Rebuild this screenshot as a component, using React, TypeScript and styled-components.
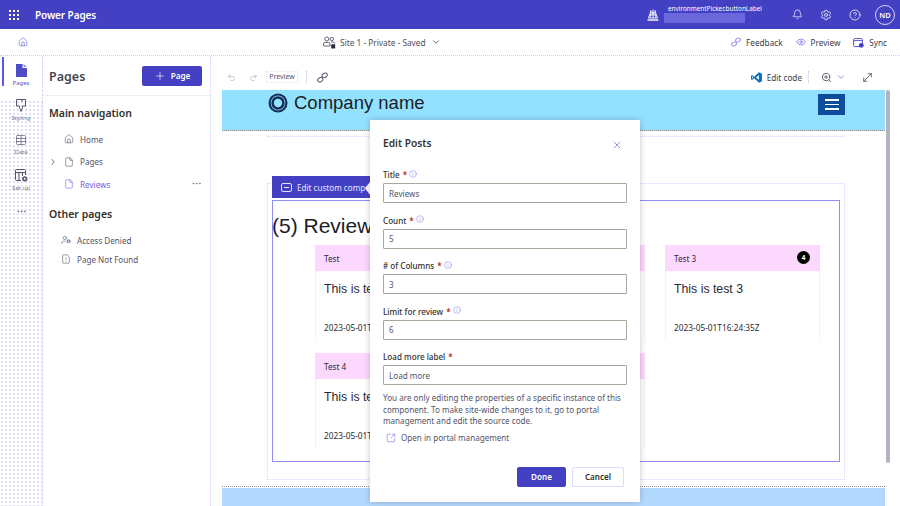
import React from 'react';
import styled, { createGlobalStyle } from 'styled-components';
import {
  Home, File, Table, Bell, Settings, HelpCircle, X, Info, ChevronDown, ChevronRight,
  Undo2, Redo2, ZoomIn, MoveDiagonal, SquareArrowOutUpRight, Plus, Eye,
  UserCog, FileWarning, MoreHorizontal,
} from 'lucide-react';

const Global = createGlobalStyle`
  html, body { margin: 0; padding: 0; background: #fff; }
  body { font-family: "Noto Sans", "Open Sans", sans-serif; color: #323130; }
  * { box-sizing: border-box; }
`;

const App_ = styled.div`
  position: relative;
  width: 900px;
  height: 506px;
  overflow: hidden;
  display: flex;
  flex-direction: column;
  background: #fff;
`;

const TopBar = styled.header`
  height: 29px;
  flex: none;
  background: #4340c4;
  color: #fff;
  display: flex;
  align-items: center;
  padding-left: 9px;
`;
const Waffle = styled.div`
  width: 10px;
  height: 10px;
  display: grid;
  grid-template-columns: repeat(3, 2px);
  grid-auto-rows: 2px;
  gap: 2px;
  margin-right: 16px;
  i { background: #fff; }
`;
const Brand = styled.span`
  font-size: 10px;
  font-weight: 600;
  letter-spacing: -0.1px;
`;
const EnvGroup = styled.div`
  margin-left: auto;
  display: flex;
  align-items: center;
  margin-right: 35px;
`;
const EnvText = styled.div`
  margin-left: 5px;
  display: flex;
  flex-direction: column;
  width: 93px;
`;
const EnvLabel = styled.span`
  font-size: 6.4px;
  line-height: 9px;
  margin-top: -3px;
  margin-left: 4px;
  white-space: nowrap;
`;
const EnvBlur = styled.span`
  display: block;
  width: 81px;
  height: 10px;
  background: #6a66dc;
`;
const TopIcons = styled.div`
  display: flex;
  align-items: center;
  gap: 17px;
  margin-right: 5px;
`;
const Avatar = styled.div`
  width: 20px;
  height: 20px;
  margin-left: -3px;
  border: 1px solid #d8d7f5;
  border-radius: 50%;
  font-size: 7.5px;
  font-weight: 600;
  display: flex;
  align-items: center;
  justify-content: center;
`;

const SubBar = styled.div`
  height: 27px;
  flex: none;
  display: flex;
  align-items: center;
  border-bottom: 1px dotted #cfcdf5;
  position: relative;
  padding: 0 13px 0 18px;
`;
const SiteInfo = styled.div`
  position: absolute;
  left: 323px;
  top: 0;
  height: 26px;
  display: flex;
  align-items: center;
  gap: 4px;
  font-size: 8.3px;
  color: #4d4b5c;
`;
const SiteChevron = styled(ChevronDown)`
  margin-left: 1px;
`;
const SubActions = styled.div`
  margin-left: auto;
  display: flex;
  align-items: center;
  gap: 13px;
`;
const SubAction = styled.span`
  display: inline-flex;
  align-items: center;
  gap: 5px;
  font-size: 8.2px;
  color: #3c3b48;
  white-space: nowrap;
`;

const Body = styled.div`
  flex: 1;
  min-height: 0;
  display: flex;
`;

const Rail = styled.nav`
  width: 43px;
  flex: none;
  border-right: 1px dotted #d4d2f7;
  background-color: #fff;
  background-image: radial-gradient(#dddbfb 0.7px, transparent 0.8px);
  background-size: 4px 4px;
  display: flex;
  flex-direction: column;
  align-items: center;
`;
const RailItem = styled.div<{ $active?: boolean }>`
  position: relative;
  width: 100%;
  height: ${p => (p.$active ? 43 : 35)}px;
  padding-top: ${p => (p.$active ? 8 : 0)}px;
  display: flex;
  flex-direction: column;
  align-items: center;
  font-size: 6px;
  line-height: 8px;
  color: ${p => (p.$active ? '#5a57c9' : '#77768a')};
  gap: 2px;
  ${p => p.$active && `
    background: #fff;
    &::before {
      content: "";
      position: absolute;
      left: 2px;
      top: 1px;
      width: 2px;
      height: 29px;
      background: #5a57e0;
    }
  `}
`;
const RailMore = styled.div`
  color: #77768a;
  height: 14px;
  display: flex;
  align-items: center;
`;

const Panel = styled.aside`
  width: 168px;
  flex: none;
  border-right: 1px dotted #d4d2f7;
  display: flex;
  flex-direction: column;
`;
const PanelHead = styled.div`
  height: 40px;
  border-bottom: 1px dotted #dcdaf8;
  padding: 0 8px 0 6px;
  display: flex;
  align-items: center;
  justify-content: space-between;
`;
const PanelTitle = styled.h1`
  margin: 1px 0 0;
  font-size: 12.5px;
  font-weight: 600;
  color: #46454f;
`;
const AddButton = styled.button`
  width: 60px;
  height: 20px;
  border: 0;
  border-radius: 2px;
  background: #4340c4;
  color: #fff;
  font: 600 8.1px "Noto Sans", sans-serif;
  display: flex;
  align-items: center;
  justify-content: center;
  gap: 5px;
  padding: 0;
`;
const SectionTitle = styled.h2<{ $top: number }>`
  margin: ${p => p.$top}px 0 0 6px;
  font-size: 10.5px;
  line-height: 14px;
  font-weight: 600;
  color: #323130;
`;
const NavRow = styled.div<{ $active?: boolean; $indent?: number; $h?: number }>`
  height: ${p => p.$h ?? 22.5}px;
  display: flex;
  align-items: center;
  padding-left: ${p => p.$indent ?? 21}px;
  gap: 6px;
  font-size: 8.1px;
  color: ${p => (p.$active ? '#6a67e6' : '#55546a')};
  position: relative;
`;
const Caret = styled.span`
  position: absolute;
  left: 5px;
  top: 6px;
  color: #55546a;
  display: flex;
`;
const RowMore = styled.span`
  position: absolute;
  right: 8px;
  top: 5px;
  color: #6a6980;
  display: flex;
`;
const NavList = styled.div<{ $top: number }>`
  margin-top: ${p => p.$top}px;
`;

const Canvas = styled.main`
  flex: 1;
  min-width: 0;
  display: flex;
  flex-direction: column;
`;
const CanvasBar = styled.div`
  height: 34px;
  flex: none;
  display: flex;
  align-items: center;
  padding: 8px 26px 0 16px;
  color: #b7b6c8;
`;
const Chip = styled.span`
  margin-left: 8px;
  width: 32px;
  height: 12px;
  font-size: 7px;
  line-height: 10px;
  text-align: center;
  color: #55546a;
  border: 1px dotted #f0d8f8;
`;
const Sep = styled.span<{ $l: number; $r: number }>`
  width: 1px;
  height: 12px;
  border-left: 1px dotted #c5c4e6;
  margin: 0 ${p => p.$r}px 0 ${p => p.$l}px;
`;
const EditCode = styled.span`
  margin-left: auto;
  display: inline-flex;
  align-items: center;
  gap: 5px;
  font-size: 8.2px;
  color: #3c3b48;
`;
const ZoomGroup = styled.span`
  display: inline-flex;
  align-items: center;
  gap: 4px;
  color: #55546a;
  svg:last-child { color: #8280d8; }
`;
const ExpandIcon = styled(MoveDiagonal)`
  margin-left: 15px;
  color: #45445a;
`;
const RedoIcon = styled(Redo2)`
  margin-left: 13px;
`;

const Viewport = styled.div`
  flex: 1;
  min-height: 0;
  display: flex;
  padding-left: 11px;
`;
const Page = styled.div`
  width: 663px;
  display: flex;
  flex-direction: column;
`;
const ScrollBar = styled.div`
  width: 4px;
  height: 373px;
  margin-left: 1px;
  background: #b3b3bd;
  border-radius: 2px;
`;
const SiteHeader = styled.div`
  height: 41px;
  flex: none;
  background: #92e1fe;
  border-bottom: 1px dotted #8d8d8d;
  display: flex;
  align-items: flex-start;
  padding: 3px 40px 0 46px;
`;
const SiteName = styled.span`
  font: 18.5px/20px "Liberation Sans", Arial, sans-serif;
  color: #1c1c28;
  margin-left: 6px;
`;
const Burger = styled.div`
  margin-left: auto;
  margin-top: 1px;
  width: 27px;
  height: 21px;
  background: #0d4d9c;
  display: flex;
  flex-direction: column;
  justify-content: center;
  align-items: center;
  gap: 3px;
  i { width: 14px; height: 1.5px; background: #fff; display: block; }
`;
const SiteMain = styled.div`
  flex: 1;
  min-height: 0;
  padding: 5px 0 0 45px;
`;
const DotLine = styled.div`
  height: 1px;
  width: 578px;
  border-top: 1px dotted #d8d6f8;
`;
const Frame = styled.div`
  position: relative;
  margin-top: 46px;
  width: 578px;
  height: 297px;
  border: 1px dotted #d8d6f8;
  padding: 16px 0 0 4px;
`;
const EditTab = styled.div`
  position: absolute;
  left: 4px;
  top: -8px;
  width: 98px;
  height: 22px;
  background: #4340c4;
  color: #e6e5ff;
  display: flex;
  align-items: center;
  gap: 5px;
  padding-left: 9px;
  font-size: 8.1px;
  white-space: nowrap;
  overflow: hidden;
  clip-path: polygon(0 0, 100% 0, 100% 6px, 93px 12px, 100% 19px, 100% 100%, 0 100%);
  svg { flex: none; }
`;
const OutlineBox = styled.section`
  width: 568px;
  height: 262px;
  border: 1px solid #8f8df0;
  padding: 11px 0 0 0;
`;
const ReviewTitle = styled.h2`
  margin: 0 0 0 -1px;
  font: 400 21px/28px "Liberation Sans", Arial, sans-serif;
  color: #1c1c28;
  padding-bottom: 5px;
  white-space: nowrap;
`;
const Cards = styled.div`
  margin-left: 42px;
  display: grid;
  grid-template-columns: repeat(3, 155px);
  column-gap: 20px;
  row-gap: 13px;
`;
const Card = styled.article`
  height: 95px;
  border-left: 1px dotted #f5d7fb;
  border-right: 1px dotted #f5d7fb;
  display: flex;
  flex-direction: column;
`;
const CardHead = styled.div`
  height: 26px;
  flex: none;
  margin: 0 -1px;
  background: #fdd8fe;
  display: flex;
  align-items: center;
  justify-content: space-between;
  padding: 0 9px;
  font-size: 8.2px;
  color: #2a2a33;
`;
const Badge = styled.span`
  width: 13px;
  height: 13px;
  border-radius: 50%;
  background: #000;
  color: #fff;
  font-size: 7px;
  font-weight: 700;
  display: flex;
  align-items: center;
  justify-content: center;
  margin: -1px 1px 0 0;
`;
const CardText = styled.p`
  margin: 10px 0 0 8px;
  font: 12.3px/16px "Liberation Sans", Arial, sans-serif;
  color: #2a2a33;
  white-space: nowrap;
`;
const CardDate = styled.time`
  margin: 25px 0 0 8px;
  font-size: 8.3px;
  line-height: 12px;
  color: #2a2a33;
  white-space: nowrap;
`;
const SiteFooter = styled.div`
  height: 20px;
  flex: none;
  border-top: 1px dotted #8d8d8d;
  padding-top: 1px;
  background: #fff;
  div { height: 100%; background: #b3d8fe; }
`;

const Modal = styled.div`
  position: absolute;
  left: 370px;
  top: 120px;
  width: 270px;
  height: 382px;
  background: #fff;
  box-shadow: 0 0 6px rgba(60, 40, 60, 0.28);
  padding: 15px 13px 0;
  display: flex;
  flex-direction: column;
`;
const ModalHead = styled.div`
  display: flex;
  align-items: center;
  justify-content: space-between;
  height: 16px;
  margin-bottom: 6.5px;
  padding-right: 4px;
`;
const ModalTitle = styled.h3`
  margin: 0;
  font-size: 10.2px;
  font-weight: 600;
  color: #323130;
`;
const CloseIcon = styled(X)`
  color: #6a67e6;
  margin-top: 3px;
`;
const Field = styled.div`
  margin-top: 9.5px;
`;
const FieldLabel = styled.label`
  height: 15px;
  margin-bottom: 1px;
  display: flex;
  align-items: center;
  gap: 3px;
  font-size: 8.1px;
  font-weight: 500;
  color: #323130;
  white-space: nowrap;
  b { color: #b3261e; font-weight: 600; }
  svg { color: #7d7aec; margin: -2px 0 0 -1px; }
`;
const FieldInput = styled.input`
  display: block;
  width: 244px;
  height: 20px;
  border: 1px solid #a8a89a;
  border-radius: 1px;
  padding: 0 5px;
  font: 8.1px "Noto Sans", sans-serif;
  color: #55546a;
  outline: none;
  background: #fff;
`;
const Note = styled.p`
  margin: 7px 0 0;
  font-size: 8.1px;
  line-height: 11.5px;
  color: #55546a;
  width: 244px;
`;
const PortalLink = styled.div`
  margin-top: 4px;
  height: 14px;
  display: flex;
  align-items: center;
  gap: 5px;
  padding-left: 3px;
  font-size: 8.1px;
  color: #55546a;
  svg { color: #6a67e6; }
`;
const ModalActions = styled.div`
  margin-top: 22px;
  display: flex;
  justify-content: flex-end;
  gap: 6px;
  padding-right: 3px;
`;
const ModalButton = styled.button<{ $primary?: boolean }>`
  width: ${p => (p.$primary ? 49 : 52)}px;
  height: 20px;
  padding: 0;
  border-radius: 2px;
  border: 1px solid ${p => (p.$primary ? '#4340c4' : '#dedcf8')};
  background: ${p => (p.$primary ? '#4340c4' : '#fff')};
  color: ${p => (p.$primary ? '#fff' : '#323130')};
  font: 600 8.1px "Noto Sans", sans-serif;
`;

const Logo = () => (
  <svg width="20" height="20" viewBox="0 0 20 20" fill="none">
    <circle cx="10" cy="10" r="9.5" fill="#12305c" />
    <circle cx="10" cy="10" r="7.4" fill="#a8d8f0" />
    <circle cx="10" cy="10" r="6.7" fill="#12305c" />
    <circle cx="10" cy="10" r="4.2" fill="#92e1fe" />
  </svg>
);

const VsCode = () => (
  <svg width="11" height="11" viewBox="0 0 16 16">
    <path fill="#0f6fc6" d="M11.5 0.5 16 2.4v11.2l-4.5 1.9L4.6 9.2 1.6 11.5 0 10.7V5.3l1.6-.8 3 2.3zM11.5 4.6 7.2 8l4.3 3.4zM1.6 6.2v3.6L3.4 8z" />
  </svg>
);

const PagesFilled = () => (
  <svg width="11" height="13" viewBox="0 0 11 13">
    <path fill="#4f4cc8" d="M0 0h6.5v4H11v9H0z" />
    <path fill="#8c89e8" d="M7.5 0 11 3H7.5z" />
  </svg>
);

const CardChip = () => (
  <svg width="11" height="9" viewBox="0 0 11 9" fill="none" stroke="#e6e5ff">
    <rect x="0.5" y="0.5" width="10" height="8" rx="1.5" />
    <path d="M3 4.5h5" />
  </svg>
);

const ChainIcon = ({ color, size = 11 }: { color: string; size?: number }) => (
  <svg width={size} height={size} viewBox="0 0 12 12" fill="none" stroke={color} strokeWidth="1.1">
    <ellipse cx="3.6" cy="8.4" rx="3" ry="2.2" transform="rotate(-30 3.6 8.4)" />
    <ellipse cx="8.4" cy="3.6" rx="3" ry="2.2" transform="rotate(-30 8.4 3.6)" />
  </svg>
);

const BrushIcon = () => (
  <svg width="12" height="13" viewBox="0 0 12 13" fill="none" stroke="#55546a" strokeWidth="1">
    <path d="M1.5.5h9v6.5h-3v1.5L6 12.5 4.5 8.5V7h-3zM7 .5v2.5" />
  </svg>
);

const SetupIcon = () => (
  <svg width="13" height="13" viewBox="0 0 13 13" fill="none" stroke="#55546a" strokeWidth="1">
    <path d="M6 11.5H1.5a1 1 0 0 1-1-1v-9a1 1 0 0 1 1-1h8a1 1 0 0 1 1 1V6M.5 3.5h10M4 3.5v8M7.5 3.5V7" />
    <circle cx="9.8" cy="9.8" r="1.8" strokeWidth="1.6" />
  </svg>
);

const SyncIcon = () => (
  <svg width="11" height="11" viewBox="0 0 11 11" fill="none">
    <rect x="0.6" y="1.6" width="8.8" height="8" rx="1" stroke="#5a57c9" />
    <path d="M.6 3.6h8.8" stroke="#5a57c9" />
    <circle cx="8.3" cy="8.3" r="2.4" fill="#4340c4" />
  </svg>
);

const SiteIcon = () => (
  <svg width="13" height="13" viewBox="0 0 13 13" fill="none" stroke="#55546a" strokeWidth="0.9">
    <circle cx="3.8" cy="3" r="2" />
    <circle cx="8.8" cy="3" r="1.7" />
    <path d="M.6 10V8a1.6 1.6 0 0 1 1.6-1.6h3.2A1.6 1.6 0 0 1 7 8v2zM8 6h2.2A1.6 1.6 0 0 1 11.8 7.6" />
    <rect x="8.2" y="8.2" width="4" height="4.2" rx="0.6" fill="#2a2a33" stroke="none" />
  </svg>
);

const EnvIcon = () => (
  <svg width="12" height="12" viewBox="0 0 12 12" fill="none" stroke="#fff" strokeWidth="0.9">
    <path d="M1.6 9a4.4 4.4 0 1 1 8.8 0zM6 .6v8.4M4 1.2C3 3.5 3 6.5 3.2 9M8 1.2c1 2.3 1 5.3.8 7.8M2 6h8M3 3.2h6" />
    <path d="M.5 11h11" strokeWidth="1.4" />
  </svg>
);

const FieldInfo = () => <Info size={8} strokeWidth={1.5} />;

const fields = [
  { label: 'Title', value: 'Reviews', info: true },
  { label: 'Count', value: '5', info: true },
  { label: '# of Columns', value: '3', info: true },
  { label: 'Limit for review', value: '6', info: true },
  { label: 'Load more label', value: 'Load more', info: false },
];

const cards = [
  { title: 'Test', text: 'This is test 1', date: '2023-05-01T16:24:35Z', badge: '5' },
  { title: 'Test 2', text: 'This is test 2', date: '2023-05-01T16:24:35Z', badge: '3' },
  { title: 'Test 3', text: 'This is test 3', date: '2023-05-01T16:24:35Z', badge: '4' },
  { title: 'Test 4', text: 'This is test 4', date: '2023-05-01T16:24:35Z', badge: '2' },
  { title: 'Test 5', text: 'This is test 5', date: '2023-05-01T16:24:35Z', badge: '1' },
];

export default function App() {
  return (
    <App_>
      <Global />
      <TopBar>
        <Waffle>{Array.from({ length: 9 }, (_, i) => <i key={i} />)}</Waffle>
        <Brand>Power Pages</Brand>
        <EnvGroup>
          <EnvIcon />
          <EnvText>
            <EnvLabel>environmentPicker.buttonLabel</EnvLabel>
            <EnvBlur />
          </EnvText>
        </EnvGroup>
        <TopIcons>
          <Bell size={11} strokeWidth={1.5} />
          <Settings size={12} strokeWidth={1.5} />
          <HelpCircle size={12} strokeWidth={1.5} stroke="#fff" />
          <Avatar>ND</Avatar>
        </TopIcons>
      </TopBar>

      <SubBar>
        <Home size={10} color="#6a67e6" strokeWidth={1.5} />
        <SiteInfo>
          <SiteIcon />
          <span>Site 1 - Private - Saved</span>
          <SiteChevron size={10} />
        </SiteInfo>
        <SubActions>
          <SubAction><ChainIcon color="#8a88ee" size={10} />Feedback</SubAction>
          <SubAction><Eye size={10} color="#7d7aec" />Preview</SubAction>
          <SubAction><SyncIcon />Sync</SubAction>
        </SubActions>
      </SubBar>

      <Body>
        <Rail>
          <RailItem $active><PagesFilled />Pages</RailItem>
          <RailItem><BrushIcon />Styling</RailItem>
          <RailItem><Table size={12} strokeWidth={1.3} color="#55546a" />Data</RailItem>
          <RailItem><SetupIcon />Set up</RailItem>
          <RailMore><MoreHorizontal size={11} /></RailMore>
        </Rail>

        <Panel>
          <PanelHead>
            <PanelTitle>Pages</PanelTitle>
            <AddButton><Plus size={12} strokeWidth={1.3} />Page</AddButton>
          </PanelHead>
          <SectionTitle $top={10}>Main navigation</SectionTitle>
          <NavList $top={8}>
            <NavRow><Home size={10} strokeWidth={1.4} />Home</NavRow>
            <NavRow>
              <Caret><ChevronRight size={10} /></Caret>
              <File size={10} strokeWidth={1.4} />Pages
            </NavRow>
            <NavRow $active>
              <File size={10} strokeWidth={1.4} />Reviews
              <RowMore><MoreHorizontal size={11} strokeWidth={1.4} /></RowMore>
            </NavRow>
          </NavList>
          <SectionTitle $top={11}>Other pages</SectionTitle>
          <NavList $top={10}>
            <NavRow $indent={18} $h={19}><UserCog size={10} strokeWidth={1.4} />Access Denied</NavRow>
            <NavRow $indent={18} $h={19}><FileWarning size={10} strokeWidth={1.4} />Page Not Found</NavRow>
          </NavList>
        </Panel>

        <Canvas>
          <CanvasBar>
            <Undo2 size={9} />
            <RedoIcon size={9} />
            <Chip>Preview</Chip>
            <Sep $l={8} $r={10} />
            <ChainIcon color="#55546a" />
            <EditCode><VsCode />Edit code</EditCode>
            <Sep $l={6} $r={12} />
            <ZoomGroup><ZoomIn size={11} /><ChevronDown size={10} /></ZoomGroup>
            <ExpandIcon size={13} strokeWidth={1.4} />
          </CanvasBar>
          <Viewport>
            <Page>
              <SiteHeader>
                <Logo />
                <SiteName>Company name</SiteName>
                <Burger><i /><i /><i /></Burger>
              </SiteHeader>
              <SiteMain>
                <DotLine />
                <Frame>
                  <EditTab><CardChip />Edit custom component</EditTab>
                  <OutlineBox>
                    <ReviewTitle>(5) Reviews</ReviewTitle>
                    <Cards>
                      {cards.map(c => (
                        <Card key={c.title}>
                          <CardHead>{c.title}<Badge>{c.badge}</Badge></CardHead>
                          <CardText>{c.text}</CardText>
                          <CardDate>{c.date}</CardDate>
                        </Card>
                      ))}
                    </Cards>
                  </OutlineBox>
                </Frame>
              </SiteMain>
              <SiteFooter><div /></SiteFooter>
            </Page>
            <ScrollBar />
          </Viewport>
        </Canvas>
      </Body>

      <Modal>
        <ModalHead>
          <ModalTitle>Edit Posts</ModalTitle>
          <CloseIcon size={12} strokeWidth={1.4} />
        </ModalHead>
        {fields.map(f => (
          <Field key={f.label}>
            <FieldLabel>{f.label}<b>*</b>{f.info && <FieldInfo />}</FieldLabel>
            <FieldInput readOnly value={f.value} />
          </Field>
        ))}
        <Note>You are only editing the properties of a specific instance of this component. To make site-wide changes to it, go to portal management and edit the source code.</Note>
        <PortalLink><SquareArrowOutUpRight size={10} strokeWidth={1.3} />Open in portal management</PortalLink>
        <ModalActions>
          <ModalButton $primary>Done</ModalButton>
          <ModalButton>Cancel</ModalButton>
        </ModalActions>
      </Modal>
    </App_>
  );
}
